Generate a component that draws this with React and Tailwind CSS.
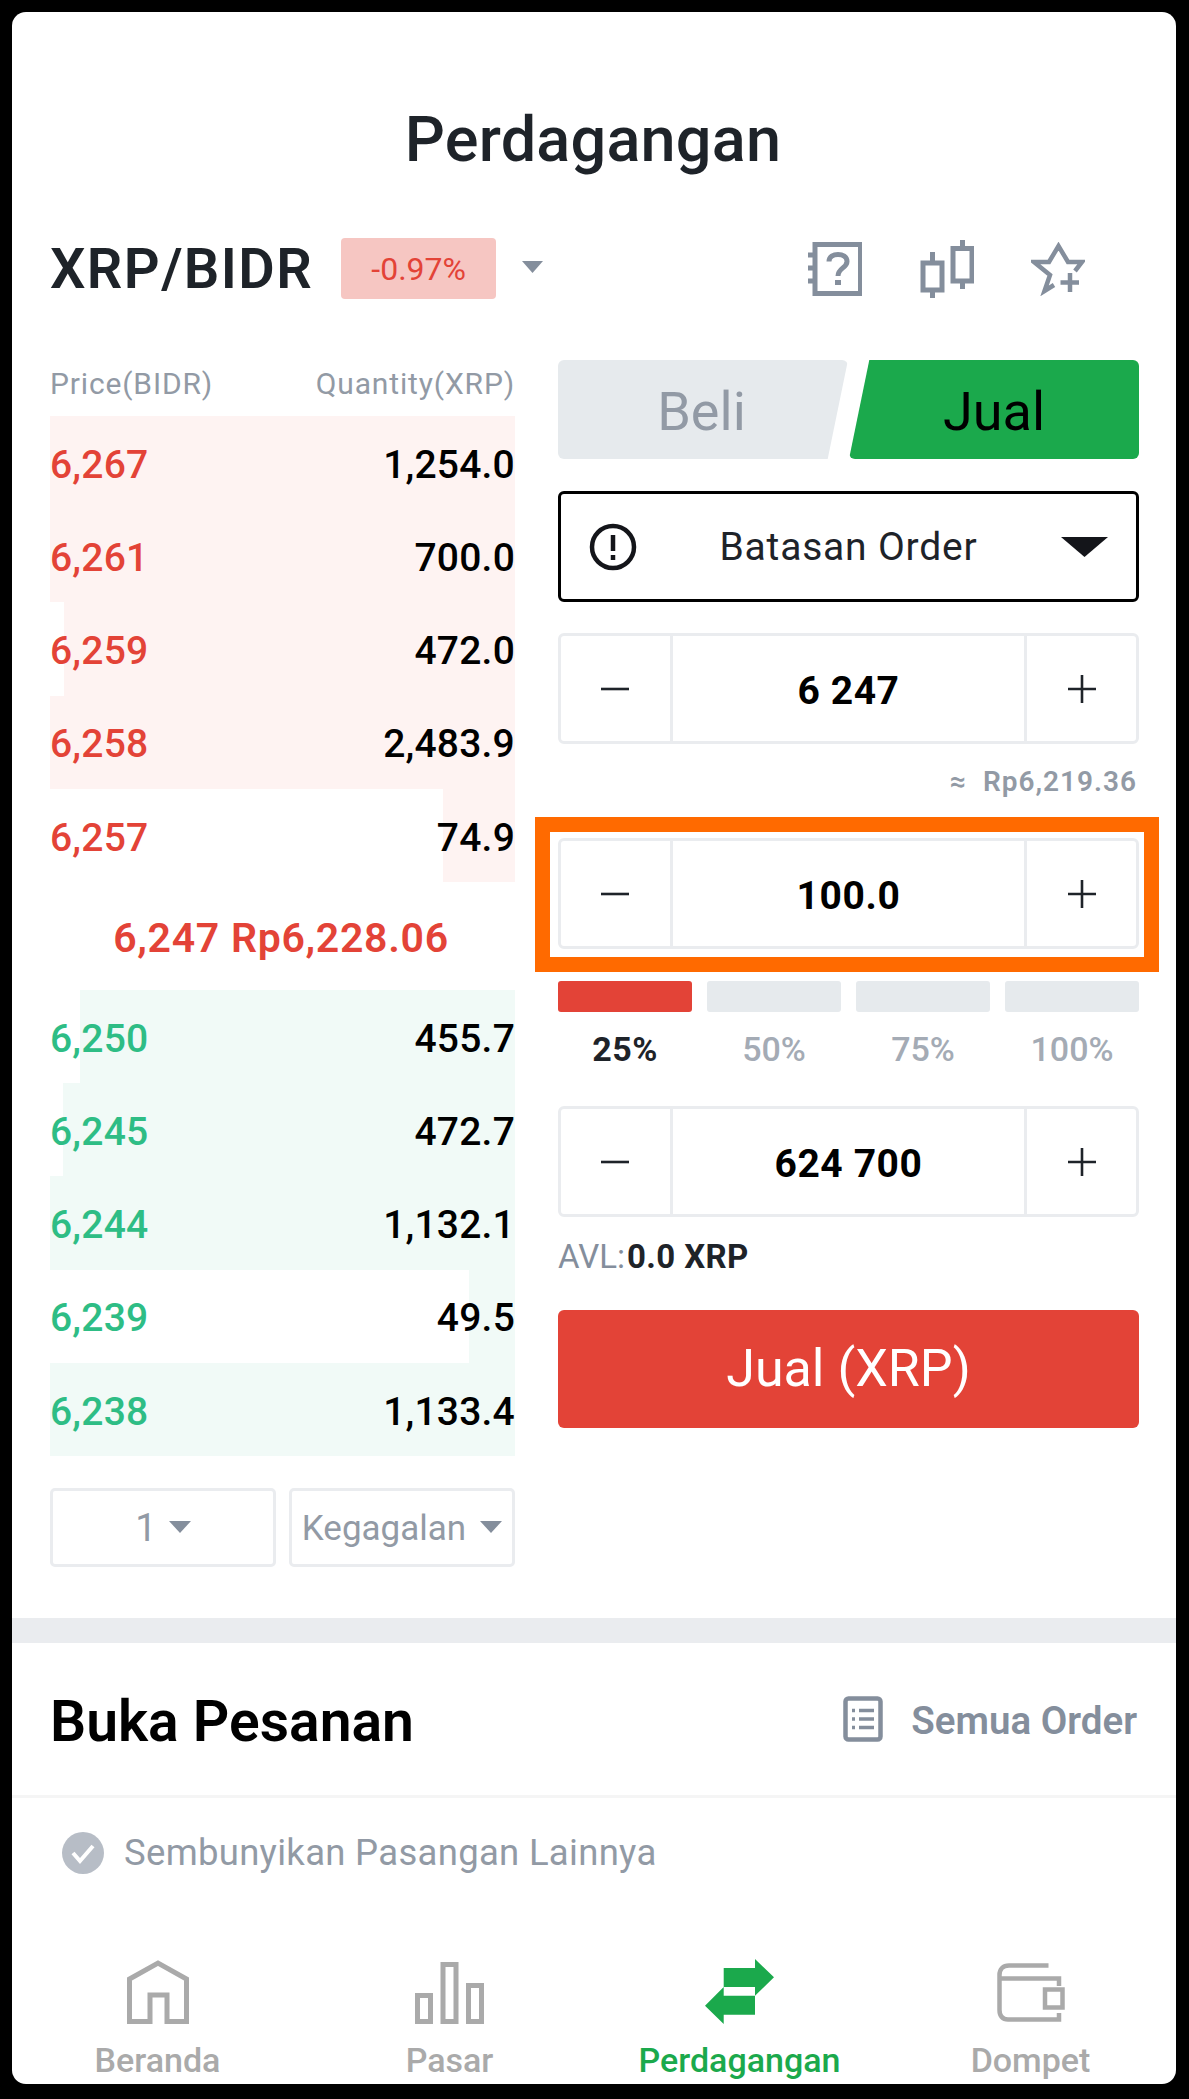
import React from "react";

const Caret = ({ className }) => (
  <svg viewBox="0 0 20 12" className={className} preserveAspectRatio="none"><path d="M0 0H20L10 12Z" fill="currentColor" /></svg>
);

const asks = [
  ["6,267", "1,254.0", 465],
  ["6,261", "700.0", 465],
  ["6,259", "472.0", 451],
  ["6,258", "2,483.9", 465],
  ["6,257", "74.9", 72],
];
const bids = [
  ["6,250", "455.7", 435],
  ["6,245", "472.7", 452],
  ["6,244", "1,132.1", 465],
  ["6,239", "49.5", 46],
  ["6,238", "1,133.4", 465],
];

function Row({ p, q, w, bar, text }) {
  return (
    <div className="relative flex h-[93.2px] items-center justify-between">
      <div className={`absolute inset-y-0 right-0 ${bar}`} style={{ width: w }} />
      <span className={`relative pt-[5px] text-[39px] font-medium tracking-[0.2px] ${text}`}>{p}</span>
      <span className="relative pt-[5px] text-[39px] font-medium tracking-[0.2px] text-black">{q}</span>
    </div>
  );
}

function Stepper({ value, className = "" }) {
  return (
    <div className={`flex h-[111px] items-stretch rounded-[6px] border-[3px] border-[#eaecef] ${className}`}>
      <div className="flex w-[112px] items-center justify-center border-r-[3px] border-[#eaecef] pr-[2px]">
        <svg width="28" height="4" viewBox="0 0 28 4"><path d="M0 2H28" stroke="#1e2329" strokeWidth="2.6" /></svg>
      </div>
      <div className="flex flex-1 items-center justify-center pt-[5px] text-[39px] font-bold tracking-[0.6px] text-black">{value}</div>
      <div className="flex w-[112px] items-center justify-center border-l-[3px] border-[#eaecef]">
        <svg width="28" height="28" viewBox="0 0 28 28"><path d="M0 14H28M14 0V28" stroke="#1e2329" strokeWidth="2.6" /></svg>
      </div>
    </div>
  );
}

export default function App() {
  return (
    <div className="h-[2099px] w-[1189px] bg-black pt-[12px] pl-[12px] font-['Roboto',sans-serif]">
      <div className="flex h-[2072px] w-[1164px] flex-col overflow-hidden rounded-[14px] bg-white">
        <div className="mt-[88px] flex h-[78px] items-center justify-center pr-[2px] text-[63px] font-medium leading-none tracking-[0.2px] text-[#1e2329]">
          Perdagangan
        </div>

        <div className="mt-[60px] flex h-[61px] items-center pl-[38px]">
          <span className="text-[56px] font-semibold tracking-[1.4px] text-[#1e2329]">XRP/BIDR</span>
          <span className="ml-[28px] flex h-[61px] w-[155px] items-center justify-center rounded-[4px] bg-[#f6c6c2] text-[32px] text-[#e34337]">
            -0.97%
          </span>
          <Caret className="mb-[3px] ml-[26px] h-[12px] w-[21px] text-[#848e9c]" />
          <div className="ml-auto flex items-center">
            <svg width="54" height="54" viewBox="0 0 54 54" className="mr-[58px]" fill="none" stroke="#848e9c">
              <path d="M7 2.500H52.500V51.500H7Z" strokeWidth="5" />
              <path d="M0 13H7M0 26H7M0 39H7" strokeWidth="5" />
              <path d="M21 19.500C21 10 39 10 39 19.500C39 26 30 26 30 34" strokeWidth="5" />
              <path d="M30 38V43" strokeWidth="6" />
            </svg>
            <svg width="54" height="58" viewBox="0 0 54 58" className="mr-[57px]" fill="none" stroke="#848e9c" strokeWidth="5">
              <path d="M3 23H22V50H3ZM12.500 12V23M12.500 50V58" />
              <path d="M33 8.500H52V41H33ZM42.500 0V8.500M42.500 41V49" />
            </svg>
            <svg width="54" height="54" viewBox="0 0 54 54" className="mr-[91px]" fill="none" stroke="#848e9c" strokeWidth="4.500">
              <path d="M44 29L51 20H37L27.500 4L18 20H3L19 33L13.500 49L23 43" />
              <path d="M29.500 40.500H48M39 31V50" />
            </svg>
          </div>
        </div>

        <div className="mt-[61px] flex pl-[38px]">
          <div className="w-[465px]">
            <div className="flex h-[56px] items-start justify-between pt-[1px] text-[30px] tracking-[0.85px] text-[#929aa5]">
              <span>Price(BIDR)</span>
              <span>Quantity(XRP)</span>
            </div>
            {asks.map((r) => (
              <Row key={r[0]} p={r[0]} q={r[1]} w={r[2]} bar="bg-[#fef3f2]" text="text-[#e34337]" />
            ))}
            <div className="flex h-[108px] items-center justify-center pt-[5px] pr-[3px] text-[41px] font-semibold tracking-[0.7px] text-[#e34337]">
              6,247 Rp6,228.06
            </div>
            {bids.map((r) => (
              <Row key={r[0]} p={r[0]} q={r[1]} w={r[2]} bar="bg-[#f1faf7]" text="text-[#2ebd85]" />
            ))}
            <div className="mt-[32px] flex gap-[13px]">
              <div className="flex h-[79px] flex-1 items-center justify-center gap-[12px] rounded-[5px] border-[3px] border-[#eaecef] text-[38px] text-[#929aa5]">
                <span className="pt-[3px]">1</span> <Caret className="h-[12px] w-[22px] text-[#848e9c]" />
              </div>
              <div className="flex h-[79px] flex-1 items-center justify-center gap-[14px] rounded-[5px] border-[3px] border-[#eaecef] text-[35px] text-[#929aa5]">
                <span className="pt-[3px]">Kegagalan</span> <Caret className="h-[12px] w-[22px] text-[#848e9c]" />
              </div>
            </div>
          </div>

          <div className="ml-[43px] w-[581px]">
            <div className="flex h-[99px] justify-between text-[54px]">
              <div className="flex w-[290px] items-center justify-center rounded-[6px] bg-[#e6eaed] pt-[3px] pr-[3px] text-[#929aa5] [clip-path:polygon(0_0,100%_0,93%_100%,0_100%)]">Beli</div>
              <div className="flex w-[290px] items-center justify-center rounded-[6px] bg-[#1ba94c] pt-[3px] text-black [clip-path:polygon(7%_0,100%_0,100%_100%,0_100%)]">Jual</div>
            </div>
            <div className="relative mt-[32px] flex h-[111px] items-center justify-center rounded-[6px] border-[3px] border-black text-[39px] tracking-[0.8px] text-[#1e2329]">
              <svg width="48" height="48" viewBox="0 0 48 48" className="absolute left-[28px] top-[29px]" fill="none">
                <circle cx="24" cy="24" r="21" stroke="#14151a" strokeWidth="4.500" />
                <path d="M24 12V28M24 32V37" stroke="#14151a" strokeWidth="4.500" />
              </svg>
              <span className="pt-[2px]">Batasan Order</span>
              <Caret className="absolute right-[28px] top-[43px] h-[20px] w-[47px] text-[#14151a]" />
            </div>
            <Stepper value="6 247" className="mt-[31px]" />
            <div className="flex h-[76px] items-center justify-end gap-[16px] pr-[2px] text-[28px] font-semibold tracking-[1px] text-[#929aa5]">
              <span>≈</span>
              <span>Rp6,219.36</span>
            </div>
            <div className="relative mt-[18px]">
              <Stepper value="100.0" />
              <div className="absolute -top-[21px] -right-[20px] -bottom-[23px] -left-[23px] border-[15px] border-[#ff6a00]" />
            </div>
            <div className="mt-[32px] grid grid-cols-4 gap-[15px]">
              <div className="h-[31px] rounded-[3px] bg-[#e34337]" />
              <div className="h-[31px] rounded-[3px] bg-[#e6eaed]" />
              <div className="h-[31px] rounded-[3px] bg-[#e6eaed]" />
              <div className="h-[31px] rounded-[3px] bg-[#e6eaed]" />
            </div>
            <div className="mt-[12px] grid grid-cols-4 gap-[15px] text-center text-[34px] font-medium text-[#a4abb5]">
              <span className="font-bold tracking-[0.4px] text-[#1e2329]">25%</span>
              <span>50%</span>
              <span>75%</span>
              <span>100%</span>
            </div>
            <Stepper value="624 700" className="mt-[31px]" />
            <div className="mt-[20px] flex h-[40px] items-center text-[33px] text-[#848e9c]">
              AVL:<span className="ml-[2px] font-bold tracking-[0.4px] text-[#1e2329]">0.0 XRP</span>
            </div>
            <div className="mt-[33px] flex h-[118px] items-center justify-center rounded-[6px] bg-[#e34337] text-[52px] text-white">
              Jual (XRP)
            </div>
          </div>
        </div>

        <div className="mt-[51px] h-[25px] shrink-0 bg-[#eaecef]" />

        <div className="flex h-[152px] shrink-0 items-center justify-between pr-[39px] pl-[38px]">
          <span className="pt-[6px] text-[57px] font-semibold text-black">Buka Pesanan</span>
          <div className="flex items-center gap-[28px]">
            <svg width="40" height="46" viewBox="0 0 40 46" fill="none" stroke="#848e9c" strokeWidth="4.500">
              <rect x="2.500" y="2.500" width="35" height="41" rx="3" />
              <path d="M9 14.500H12M16 14.500H31M9 23H12M16 23H31M9 31.500H12M16 31.500H31" strokeWidth="3.500" />
            </svg>
            <span className="pt-[3px] text-[38.500px] font-semibold text-[#848e9c]">Semua Order</span>
          </div>
        </div>

        <div className="h-[3px] shrink-0 bg-[#f5f5f5]" />

        <div className="flex h-[110px] shrink-0 items-center pl-[50px]">
          <svg width="42" height="42" viewBox="0 0 42 42">
            <circle cx="21" cy="21" r="21" fill="#b7bdc6" />
            <path d="M11 21L18 29L31 14" fill="none" stroke="#fff" strokeWidth="4" />
          </svg>
          <span className="ml-[20px] text-[36.500px] tracking-[0.3px] text-[#929aa5]">Sembunyikan Pasangan Lainnya</span>
        </div>

        <div className="mt-auto grid h-[132px] grid-cols-4 text-[34px] font-medium leading-[40px]">
          <div className="flex flex-col items-center text-[#aaaaaa]">
            <div className="flex h-[72px] items-end">
              <svg width="62" height="64" viewBox="0 0 62 64" fill="none" stroke="#aaaaaa" strokeWidth="5">
                <path d="M2.500 61.500V19L31 3L59.500 19V61.500H40V35H23V61.500Z" />
              </svg>
            </div>
            <span className="mt-[16px]">Beranda</span>
          </div>
          <div className="flex flex-col items-center pl-[2px] text-[#aaaaaa]">
            <div className="flex h-[72px] items-end">
              <svg width="69" height="62" viewBox="0 0 69 62" fill="none" stroke="#aaaaaa" strokeWidth="5">
                <path d="M2.500 33.500H15.500V59.500H2.500ZM28 2.500H41V59.500H28ZM53.500 23.500H66.500V59.500H53.500Z" />
              </svg>
            </div>
            <span className="mt-[16px]">Pasar</span>
          </div>
          <div className="flex flex-col items-center text-[#1ba94c]">
            <div className="flex h-[72px] items-end">
              <svg width="69" height="65" viewBox="0 0 69 65" fill="#1ba94c">
                <path d="M18.700 9H50V0L69 18.300L50 36.700V28H18.700Z" />
                <path d="M18.700 28V36.700H50V55.700H18.700V65L0 46.700Z" />
              </svg>
            </div>
            <span className="mt-[16px]">Perdagangan</span>
          </div>
          <div className="flex flex-col items-center text-[#aaaaaa]">
            <div className="flex h-[72px] items-end pb-[2px]">
              <svg width="68" height="59" viewBox="0 0 68 59" fill="none" stroke="#aaaaaa" strokeWidth="4.500">
                <path d="M51.500 2.500H12C6 2.500 2.500 6 2.500 12V47C2.500 53 5.500 56.500 11 56.500H62V50" />
                <path d="M4 15.500H62V23" />
                <path d="M48 26.500H65.500V44.500H48Z" />
              </svg>
            </div>
            <span className="mt-[16px]">Dompet</span>
          </div>
        </div>
      </div>
    </div>
  );
}
